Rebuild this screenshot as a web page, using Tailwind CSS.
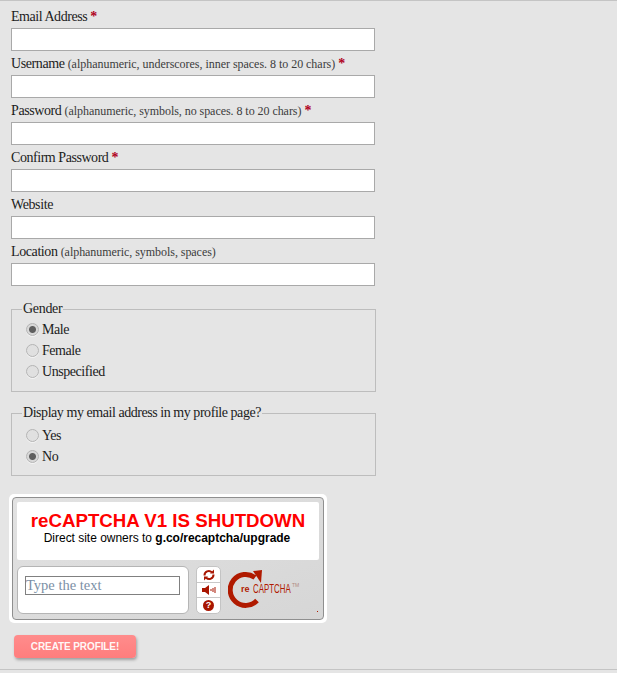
<!DOCTYPE html>
<html>
<head>
<meta charset="utf-8">
<title>Create profile</title>
<script src="https://cdn.jsdelivr.net/npm/@tailwindcss/browser@4"></script>
</head>
<body class="bg-[#e5e5e5] font-['Liberation_Serif',serif] text-[#1c1c1c]">
<div class="w-[617px] h-[673px] overflow-hidden border-t border-[#c4c4c4] pl-[11px]">
  <form class="w-[365px]">
    <!-- text fields -->
    <div class="flex flex-col pt-[5px]">
      <div class="h-[47px]">
        <label class="block h-[22px] text-[14px] tracking-[-0.45px] leading-[21px]">Email Address <span class="font-bold text-[#b00020]">*</span></label>
        <input type="text" class="block w-[364px] h-[23px] bg-white border border-[#a9a9a9]">
      </div>
      <div class="h-[47px]">
        <label class="block h-[22px] text-[14px] tracking-[-0.4px] leading-[21px]">Username <span class="text-[12px] tracking-[-0.03px] text-[#3c3c3c]">(alphanumeric, underscores, inner spaces. 8 to 20 chars)</span> <span class="font-bold text-[#b00020]">*</span></label>
        <input type="text" class="block w-[364px] h-[23px] bg-white border border-[#a9a9a9]">
      </div>
      <div class="h-[47px]">
        <label class="block h-[22px] text-[14px] tracking-[-0.4px] leading-[21px]">Password <span class="text-[12px] tracking-[-0.05px] text-[#3c3c3c]">(alphanumeric, symbols, no spaces. 8 to 20 chars)</span> <span class="font-bold text-[#b00020]">*</span></label>
        <input type="password" class="block w-[364px] h-[23px] bg-white border border-[#a9a9a9]">
      </div>
      <div class="h-[47px]">
        <label class="block h-[22px] text-[14px] tracking-[-0.45px] leading-[21px]">Confirm Password <span class="font-bold text-[#b00020]">*</span></label>
        <input type="password" class="block w-[364px] h-[23px] bg-white border border-[#a9a9a9]">
      </div>
      <div class="h-[47px]">
        <label class="block h-[22px] text-[14px] tracking-[-0.4px] leading-[21px]">Website</label>
        <input type="text" class="block w-[364px] h-[23px] bg-white border border-[#a9a9a9]">
      </div>
      <div class="h-[47px]">
        <label class="block h-[22px] text-[14px] tracking-[-0.4px] leading-[21px]">Location <span class="text-[12px] tracking-[-0.05px] text-[#3c3c3c]">(alphanumeric, symbols, spaces)</span></label>
        <input type="text" class="block w-[364px] h-[23px] bg-white border border-[#a9a9a9]">
      </div>
    </div>

    <!-- gender -->
    <fieldset class="mt-[13px] w-[365px] h-[91px] border border-[#bdbdbd] pl-[14px]">
      <legend class="ml-[-4px] px-[1px] text-[14px] tracking-[-0.3px] leading-[16px]">Gender</legend>
      <div class="flex flex-col pt-[2px] text-[14px] tracking-[-0.45px]">
        <label class="flex items-center h-[21px] gap-[3px]"><input type="radio" name="gender" checked class="appearance-none m-0 w-[13px] h-[13px] rounded-full border border-[#b4b4b4] bg-[#e0e0e0] shadow-[0_1px_0_#f4f4f4] checked:bg-[radial-gradient(circle,#5f5f5f_0,#5f5f5f_3px,#d8d8d8_4px)]">Male</label>
        <label class="flex items-center h-[21px] gap-[3px]"><input type="radio" name="gender" class="appearance-none m-0 w-[13px] h-[13px] rounded-full border border-[#b4b4b4] bg-[#e0e0e0] shadow-[0_1px_0_#f4f4f4] checked:bg-[radial-gradient(circle,#5f5f5f_0,#5f5f5f_3px,#d8d8d8_4px)]">Female</label>
        <label class="flex items-center h-[21px] gap-[3px]"><input type="radio" name="gender" class="appearance-none m-0 w-[13px] h-[13px] rounded-full border border-[#b4b4b4] bg-[#e0e0e0] shadow-[0_1px_0_#f4f4f4] checked:bg-[radial-gradient(circle,#5f5f5f_0,#5f5f5f_3px,#d8d8d8_4px)]">Unspecified</label>
      </div>
    </fieldset>

    <!-- show email -->
    <fieldset class="mt-[13px] w-[365px] h-[71px] border border-[#bdbdbd] pl-[14px]">
      <legend class="ml-[-4px] px-[1px] text-[14px] tracking-[-0.45px] leading-[16px]">Display my email address in my profile page?</legend>
      <div class="flex flex-col pt-[4px] text-[14px] tracking-[-0.45px]">
        <label class="flex items-center h-[21px] gap-[3px]"><input type="radio" name="show" class="appearance-none m-0 w-[13px] h-[13px] rounded-full border border-[#b4b4b4] bg-[#e0e0e0] shadow-[0_1px_0_#f4f4f4] checked:bg-[radial-gradient(circle,#5f5f5f_0,#5f5f5f_3px,#d8d8d8_4px)]">Yes</label>
        <label class="flex items-center h-[21px] gap-[3px]"><input type="radio" name="show" checked class="appearance-none m-0 w-[13px] h-[13px] rounded-full border border-[#b4b4b4] bg-[#e0e0e0] shadow-[0_1px_0_#f4f4f4] checked:bg-[radial-gradient(circle,#5f5f5f_0,#5f5f5f_3px,#d8d8d8_4px)]">No</label>
      </div>
    </fieldset>

    <!-- recaptcha -->
    <div class="mt-[18px] ml-[-2px] w-[318px] h-[129px] bg-white rounded-[5px] p-[3px]">
      <div class="relative w-[312px] h-[123px] border border-[#8f8f8f] rounded-[4px] bg-gradient-to-br from-[#e2e2e2] to-[#d6d6d6] p-[4px] font-['Liberation_Sans',sans-serif]">
        <div class="h-[58px] bg-white rounded-[2px] flex flex-col items-center pt-[7px] text-black">
          <div class="text-[18.7px] leading-[24px] font-bold text-[#ff0000]">reCAPTCHA V1 IS SHUTDOWN</div>
          <div class="text-[12px] tracking-[-0.02px] leading-[11px] pr-[2px]">Direct site owners to <b>g.co/recaptcha/upgrade</b></div>
        </div>
        <div class="flex mt-[6px]">
          <div class="w-[172px] h-[48px] bg-white border border-[#b5b5b5] rounded-[6px] pl-[7px] pt-[9px]">
            <input type="text" placeholder="Type the text" class="block w-[155px] h-[19px] border border-[#808080] bg-white font-['Liberation_Serif',serif] text-[14.5px] placeholder:text-[#7c90a6]">
          </div>
          <div class="ml-[7px] w-[25px] h-[48px] bg-white border border-[#c4c4c4] rounded-[5px] flex flex-col">
            <div class="h-[16px] flex items-center justify-center border-b border-[#c8c8c8]">
              <svg width="12" height="12" viewBox="0 0 12 12" fill="none" stroke="#a81500" stroke-width="2"><path d="M1.5 6.5a4.3 4.3 0 0 1 7.3-3.2"/><path d="M10.5 5.5a4.3 4.3 0 0 1-7.3 3.2"/><path d="M7 4.5h4v-4z" fill="#a81500" stroke="none"/><path d="M5 7.5h-4v4z" fill="#a81500" stroke="none"/></svg>
            </div>
            <div class="h-[15px] flex items-center justify-center border-b border-[#c8c8c8]">
              <svg width="14" height="10" viewBox="0 0 14 10" fill="#a81500"><path d="M0 3h3l4-3v10l-4-3h-3z"/><rect x="8.5" y="4" width="1" height="2"/><rect x="10.5" y="3" width="1" height="4"/><rect x="12.5" y="2" width="1" height="6"/></svg>
            </div>
            <div class="flex-1 flex items-center justify-center">
              <div class="w-[11px] h-[11px] rounded-full bg-[#a81500] text-white text-[9px] leading-[11px] font-bold text-center">?</div>
            </div>
          </div>
          <!-- logo -->
          <div class="relative ml-[7px] w-[76px] h-[48px]">
            <svg class="absolute left-0 top-[2px]" width="36" height="44" viewBox="0 0 36 44" fill="none"><path d="M27 9.5a15.5 15.5 0 1 0 2 23" stroke="#b01a00" stroke-width="5"/><path d="M25 3l9-1-1 13z" fill="#b01a00"/></svg>
            <span class="absolute left-[13px] top-[18px] text-[9px] leading-[10px] font-bold text-[#b01a00]">re</span>
            <span class="absolute left-[25px] top-[16px] text-[12.5px] leading-[14px] text-[#b01a00] scale-x-[0.63] origin-left">CAPTCHA</span>
            <span class="absolute left-[64px] top-[16px] text-[5px] leading-[6px] text-[#b08a80]">TM</span>
          </div>
        </div>
        <div class="absolute right-[5px] bottom-[7px] w-[1px] h-[1px] bg-[#b01a00]"></div>
      </div>
    </div>

    <button type="button" class="block mt-[12px] ml-[3px] w-[122px] h-[23px] rounded-[4px] bg-gradient-to-b from-[#ff8c8c] to-[#ff7d7d] shadow-[1px_2px_3px_rgba(0,0,0,0.3)] text-white/95 text-[10px] font-bold tracking-[-0.1px] font-['Liberation_Sans',sans-serif]">CREATE PROFILE!</button>
  </form>
  <div class="mt-[11px] ml-[-11px] w-[617px] border-t border-[#c4c4c4]"></div>
</div>
</body>
</html>
